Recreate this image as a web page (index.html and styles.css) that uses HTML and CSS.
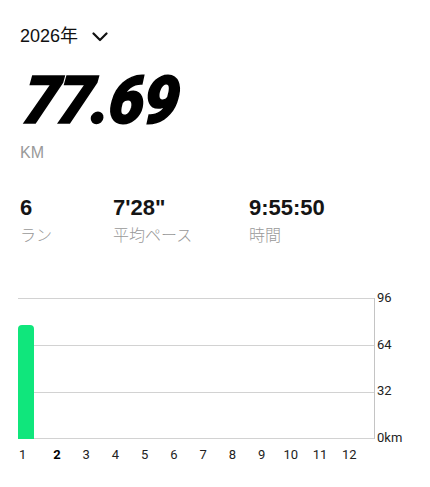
FILE: index.html
```html
<!DOCTYPE html>
<html lang="ja">
<head>
    <meta charset="UTF-8">
    <meta name="viewport" content="width=device-width, initial-scale=1.0">
    <title>Activity</title>
    <link rel="stylesheet" href="styles.css">
</head>
<body>

<div class="page">
    <div class="year-select">
        <span>2026年</span>
        <svg class="chevron" width="16" height="10" viewBox="0 0 16 10">
            <polyline points="1.5,1.5 8,8 14.5,1.5" fill="none" stroke="#111" stroke-width="2.2" stroke-linecap="round" stroke-linejoin="round"/>
        </svg>
    </div>

    <div class="total"><span>77.69</span></div>
    <div class="unit">KM</div>

    <div class="stats">
        <div class="stat">
            <div class="stat-value">6</div>
            <div class="stat-label">ラン</div>
        </div>
        <div class="stat">
            <div class="stat-value">7'28"</div>
            <div class="stat-label">平均ペース</div>
        </div>
        <div class="stat">
            <div class="stat-value">9:55:50</div>
            <div class="stat-label">時間</div>
        </div>
    </div>

    <div class="chart">
        <div class="chart-row">
            <div class="plot">
                <div class="col"><div class="bar" style="height: 114px"></div></div>
                <div class="col"></div>
                <div class="col"></div>
                <div class="col"></div>
                <div class="col"></div>
                <div class="col"></div>
                <div class="col"></div>
                <div class="col"></div>
                <div class="col"></div>
                <div class="col"></div>
                <div class="col"></div>
                <div class="col"></div>
            </div>
            <div class="y-axis">
                <span>96</span>
                <span>64</span>
                <span>32</span>
                <span>0km</span>
            </div>
        </div>
        <div class="months">
            <span class="first">1</span>
            <span class="current">2</span>
            <span>3</span>
            <span>4</span>
            <span>5</span>
            <span>6</span>
            <span>7</span>
            <span>8</span>
            <span>9</span>
            <span>10</span>
            <span>11</span>
            <span>12</span>
        </div>
    </div>
</div>

</body>
</html>
```

FILE: styles.css
```css
body {
    margin: 0;
    padding: 0;
    background-color: #fff;
    color: #111;
    font-family: "Liberation Sans", "Noto Sans CJK JP", sans-serif;
}

.page {
    padding: 24px 0 0 20px;
}

.year-select {
    display: flex;
    align-items: center;
    font-size: 18px;
    line-height: 24px;
}

.chevron {
    margin-left: 14px;
    margin-top: 2px;
}

.total {
    margin-top: 20px;
    font-family: Roboto, sans-serif;
    font-size: 66px;
    line-height: 66px;
    font-weight: 900;
    font-style: italic;
    letter-spacing: -1.5px;
    color: #000;
}

.total span {
    display: inline-block;
    -webkit-text-stroke: 1.6px #000;
    transform: skewX(-7deg) scaleX(0.96);
    transform-origin: left bottom;
}

.unit {
    margin-top: 9px;
    font-size: 16px;
    line-height: 20px;
    color: #999;
}

.stats {
    display: flex;
    margin-top: 32px;
}

.stat:nth-child(1) {
    width: 93px;
}

.stat:nth-child(2) {
    width: 136px;
}

.stat-value {
    font-size: 22px;
    line-height: 26px;
    font-weight: bold;
    color: #151515;
}

.stat-label {
    margin-top: 2px;
    font-family: "Noto Sans CJK JP", sans-serif;
    font-size: 16px;
    line-height: 22px;
    font-weight: 300;
    color: #999;
}

.chart {
    margin-top: 53px;
    margin-left: -2px;
}

.chart-row {
    display: flex;
}

.plot {
    width: 356px;
    height: 141px;
    border-right: 1px solid #c4c4c4;
    display: grid;
    grid-template-columns: repeat(12, 1fr);
    align-items: end;
    background-image:
        linear-gradient(#d2d2d2, #d2d2d2),
        linear-gradient(#d2d2d2, #d2d2d2),
        linear-gradient(#d2d2d2, #d2d2d2),
        linear-gradient(#d2d2d2, #d2d2d2);
    background-size: 100% 1px;
    background-repeat: no-repeat;
    background-position: 0 0, 0 47px, 0 94px, 0 140px;
}

.col {
    height: 100%;
    display: flex;
    align-items: flex-end;
}

.bar {
    width: 16px;
    background-color: #10e67c;
    border-radius: 4px 4px 0 0;
}

.y-axis {
    display: flex;
    flex-direction: column;
    justify-content: space-between;
    height: 156px;
    margin-top: -8px;
    margin-left: 2px;
    font-family: Roboto, sans-serif;
    font-size: 13px;
    line-height: 16px;
    color: #222;
}

.months {
    display: grid;
    grid-template-columns: repeat(12, 29.25px);
    margin-left: -5px;
    margin-top: 1px;
    font-family: Roboto, sans-serif;
    font-size: 13px;
    line-height: 16px;
    color: #222;
    text-align: center;
}

.months .first {
    text-align: left;
    padding-left: 6px;
}

.months .current {
    font-weight: bold;
    color: #000;
}
```
